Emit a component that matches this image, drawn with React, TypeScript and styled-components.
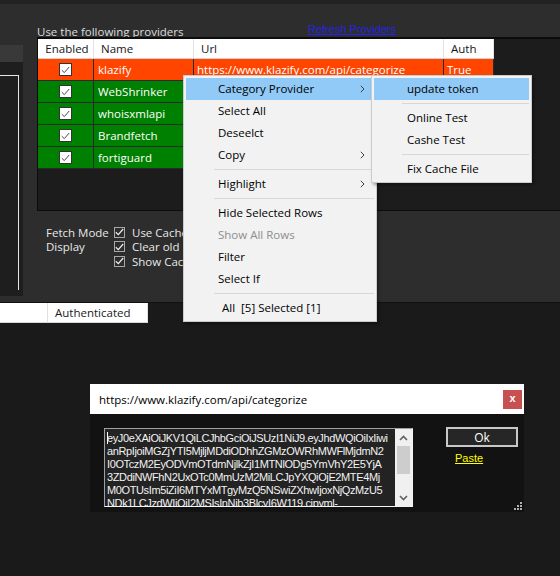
import React from "react";
import styled, { createGlobalStyle } from "styled-components";

const UI = `"Open Sans", "Noto Sans", sans-serif`;
const MS = `"Liberation Sans", Arial, sans-serif`;

const Global = createGlobalStyle`
  html, body { margin: 0; padding: 0; background: #1a1a1a; }
  #root { width: 560px; height: 576px; }
  * { box-sizing: border-box; }
`;

const Screen = styled.div`
  position: relative;
  width: 560px;
  height: 576px;
  overflow: hidden;
  background: #1a1a1a;
  font-family: ${UI};
  font-size: 11.5px;
`;

const TopPanel = styled.div`
  height: 303px;
  border-top: 4px solid #222222;
  border-bottom: 1px solid #101010;
  background: #2d2d2d;
  display: flex;
`;

const LeftPane = styled.div`
  width: 23px;
  padding-top: 41px;
  display: flex;
  flex-direction: column;
`;

const PaneTab = styled.div`
  height: 17px;
  background: #393939;
`;

const PaneBody = styled.div`
  height: 234px;
  background: #1e1e1e;
  padding-top: 13px;
`;

const PaneFrame = styled.div`
  width: 19px;
  height: 215px;
  border-top: 1px solid #e6e6e6;
  border-right: 1px solid #e6e6e6;
`;

const Group = styled.div`
  margin-left: 14px;
  flex: 1;
  padding-top: 21px;
  display: flex;
  flex-direction: column;
  min-width: 0;
`;

const LabelRow = styled.div`
  height: 12px;
  display: grid;
  grid-template-columns: 271px auto;
  align-items: start;
`;

const GroupLabel = styled.span`
  color: #dcdcdc;
  line-height: 14px;
  white-space: nowrap;
`;

const LinkText = styled.span<{ $color: string }>`
  font-family: ${MS};
  font-size: 11px;
  color: ${(p) => p.$color};
  text-decoration: underline;
  white-space: nowrap;
`;

const RefreshLink = styled(LinkText)`
  line-height: 12px;
  margin-top: -2px;
`;

const Grid = styled.div`
  height: 174px;
  border-top: 2px solid #0c0c0c;
  border-left: 1px solid #0c0c0c;
  border-bottom: 1px solid #0c0c0c;
  background: #1c1c1c;
  position: relative;
  z-index: 1;
`;

const GridRow = styled.div<{ $h: number }>`
  display: grid;
  grid-template-columns: 56px 100px 250px 50px;
  height: ${(p) => p.$h}px;
`;

const HeadCell = styled.div<{ $center?: boolean }>`
  background: #ffffff;
  border-right: 1px solid #e3e3e3;
  border-bottom: 1px solid #d2d2d2;
  color: #151515;
  display: flex;
  align-items: center;
  justify-content: ${(p) => (p.$center ? "center" : "flex-start")};
  padding-left: ${(p) => (p.$center ? 3 : 7)}px;
  white-space: nowrap;
`;

const Cell = styled.div<{ $bg: string; $center?: boolean; $pad?: number }>`
  background: ${(p) => p.$bg};
  border-right: 1px solid #2a2a2a;
  border-bottom: 1px solid #2a2a2a;
  color: #ffffff;
  display: flex;
  align-items: center;
  justify-content: ${(p) => (p.$center ? "center" : "flex-start")};
  padding-left: ${(p) => (p.$center ? 0 : p.$pad ?? 3)}px;
  white-space: nowrap;
  overflow: hidden;
`;

const GridCheck = styled.span`
  width: 13px;
  height: 13px;
  background: #ffffff;
  border: 1px solid #333333;
  display: flex;
  align-items: center;
  justify-content: center;
`;

const Options = styled.div`
  margin-top: 14px;
  padding-left: 9px;
  display: grid;
  grid-template-columns: 68px auto;
  grid-auto-rows: 14.5px;
  color: #e8e8e8;
  align-items: center;
`;

const OptLabel = styled.span`
  white-space: nowrap;
`;

const OptCheck = styled.label`
  display: flex;
  align-items: center;
  gap: 7px;
  white-space: nowrap;
`;

const OptBox = styled.span`
  width: 11px;
  height: 11px;
  border: 1px solid #a8a8a8;
  background: #2d2d2d;
  display: flex;
  align-items: center;
  justify-content: center;
`;

const ListHeader = styled.div`
  width: 148px;
  height: 20px;
  background: #ffffff;
  display: flex;
`;

const ListHeadCell = styled.div<{ $w?: number }>`
  width: ${(p) => (p.$w ? `${p.$w}px` : "auto")};
  flex: ${(p) => (p.$w ? "none" : 1)};
  border-right: 1px solid #e0e0e0;
  border-bottom: 1px solid #d6d6d6;
  padding-left: 7px;
  line-height: 19px;
  color: #1a1a1a;
`;

const Menu = styled.div<{ $left: number; $width: number; $z: number }>`
  position: absolute;
  top: 75px;
  left: ${(p) => p.$left}px;
  width: ${(p) => p.$width}px;
  background: #f2f2f2;
  border: 1px solid #cccccc;
  padding: 2px;
  box-shadow: 2px 2px 3px rgba(0, 0, 0, 0.35);
  color: #000000;
  z-index: ${(p) => p.$z};
`;

const MenuItem = styled.div<{ $hot?: boolean; $off?: boolean; $indent: number }>`
  height: 22px;
  display: flex;
  align-items: center;
  padding-left: ${(p) => p.$indent}px;
  padding-bottom: 1px;
  background: ${(p) => (p.$hot ? "#91c9f7" : "transparent")};
  color: ${(p) => (p.$off ? "#8d8d8d" : "#000000")};
  white-space: pre;
`;

const Arrow = styled.svg`
  margin-left: auto;
  margin-right: 9px;
`;

const MenuSep = styled.div`
  height: 1px;
  background: #d7d7d7;
  margin: 3px 0 3px 28px;
`;

const Dialog = styled.div`
  position: absolute;
  left: 90px;
  top: 384px;
  width: 434px;
  height: 128px;
  display: flex;
  flex-direction: column;
  z-index: 3;
`;

const TitleBar = styled.div`
  height: 30px;
  background: #ffffff;
  display: flex;
  align-items: center;
  padding-left: 9px;
  color: #000000;
`;

const Title = styled.span`
  flex: 1;
  white-space: nowrap;
`;

const CloseBtn = styled.div`
  width: 19px;
  height: 19px;
  margin-right: 2px;
  background: #c75050;
  color: #ffffff;
  font-family: ${MS};
  font-weight: bold;
  font-size: 11px;
  display: flex;
  align-items: center;
  justify-content: center;
  padding-bottom: 2px;
`;

const DialogBody = styled.div`
  flex: 1;
  background: #121212;
  padding: 14px 0 0 14px;
  display: flex;
  position: relative;
`;

const TextBox = styled.div`
  width: 309px;
  height: 79px;
  border: 1px solid;
  border-color: #a0a0a0 #f4f4f4 #f4f4f4 #a0a0a0;
  background: #232323;
  display: flex;
`;

const TokenText = styled.div`
  flex: 1;
  padding: 3px 0 0 2px;
  overflow: hidden;
  font-family: ${MS};
  font-size: 11px;
  letter-spacing: -0.38px;
  line-height: 13px;
  color: #f2f2f2;
  white-space: pre;
`;

const Caret = styled.span`
  display: inline-block;
  width: 1px;
  height: 12px;
  background: #ffffff;
  vertical-align: -2px;
  margin-right: -1px;
`;

const ScrollBar = styled.div`
  width: 17px;
  background: #f0f0f0;
  display: flex;
  flex-direction: column;
`;

const ScrollArrow = styled.div`
  height: 17px;
  display: flex;
  align-items: center;
  justify-content: center;
`;

const ScrollTrack = styled.div`
  flex: 1;
  padding: 0 2px;
`;

const ScrollThumb = styled.div`
  height: 28px;
  background: #cdcdcd;
`;

const SideCol = styled.div`
  margin-left: 33px;
  width: 72px;
  display: flex;
  flex-direction: column;
  margin-top: -1px;
`;

const OkButton = styled.div`
  height: 20px;
  border: 2px solid #c8c8c8;
  background: #262626;
  color: #ffffff;
  display: flex;
  align-items: center;
  justify-content: center;
  font-size: 12px;
`;

const PasteLink = styled(LinkText)`
  margin-top: 4px;
  margin-left: 9px;
  line-height: 14px;
`;

const Grip = styled.svg`
  position: absolute;
  right: 2px;
  bottom: 2px;
`;

const CheckMark = ({ color, w }: { color: string; w: number }) => (
  <svg width="9" height="8" viewBox="0 0 9 8">
    <path d="M0.8 4.2 L3.3 6.6 L8.2 1" fill="none" stroke={color} strokeWidth={w} />
  </svg>
);

const Chevron = () => (
  <Arrow width="5" height="8" viewBox="0 0 5 8">
    <path d="M0.8 0.8 L4 4 L0.8 7.2" fill="none" stroke="#404040" strokeWidth="1" />
  </Arrow>
);

const providers = [
  { name: "klazify", url: "https://www.klazify.com/api/categorize", auth: "True", bg: "#ff4500" },
  { name: "WebShrinker", url: "", auth: "", bg: "#008000" },
  { name: "whoisxmlapi", url: "", auth: "", bg: "#008000" },
  { name: "Brandfetch", url: "", auth: "", bg: "#008000" },
  { name: "fortiguard", url: "", auth: "", bg: "#008000" },
];

const tokenLines = [
  "eyJ0eXAiOiJKV1QiLCJhbGciOiJSUzI1NiJ9.eyJhdWQiOiIxIiwi",
  "anRpIjoiMGZjYTI5MjljMDdiODhhZGMzOWRhMWFlMjdmN2",
  "I0OTczM2EyODVmOTdmNjlkZjI1MTNlODg5YmVhY2E5YjA",
  "3ZDdiNWFhN2UxOTc0MmUzM2MiLCJpYXQiOjE2MTE4Mj",
  "M0OTUsIm5iZiI6MTYxMTgyMzQ5NSwiZXhwIjoxNjQzMzU5",
  "NDk1LCJzdWIiOiI2MSIsInNjb3BlcyI6W119.cjpyml-",
];

type Entry = { label?: string; hot?: boolean; off?: boolean; sub?: boolean; sep?: boolean; indent?: number };

const mainMenu: Entry[] = [
  { label: "Category Provider", hot: true, sub: true },
  { label: "Select All" },
  { label: "Deseelct" },
  { label: "Copy", sub: true },
  { sep: true },
  { label: "Highlight", sub: true },
  { sep: true },
  { label: "Hide Selected Rows" },
  { label: "Show All Rows", off: true },
  { label: "Filter" },
  { label: "Select If" },
  { sep: true },
  { label: "All  [5] Selected [1]", indent: 36 },
];

const subMenu: Entry[] = [
  { label: "update token", hot: true },
  { sep: true },
  { label: "Online Test" },
  { label: "Cashe Test" },
  { sep: true },
  { label: "Fix Cache File" },
];

const renderMenu = (items: Entry[], indent: number) =>
  items.map((it, i) =>
    it.sep ? (
      <MenuSep key={i} />
    ) : (
      <MenuItem key={i} $hot={it.hot} $off={it.off} $indent={it.indent ?? indent}>
        {it.label}
        {it.sub && <Chevron />}
      </MenuItem>
    )
  );

export default function App() {
  return (
    <Screen>
      <Global />
      <TopPanel>
        <LeftPane>
          <PaneTab />
          <PaneBody>
            <PaneFrame />
          </PaneBody>
        </LeftPane>
        <Group>
          <LabelRow>
            <GroupLabel>Use the following providers</GroupLabel>
            <RefreshLink $color="#2424e6">Refresh Providers</RefreshLink>
          </LabelRow>
          <Grid>
            <GridRow $h={20}>
              <HeadCell $center>Enabled</HeadCell>
              <HeadCell>Name</HeadCell>
              <HeadCell>Url</HeadCell>
              <HeadCell>Auth</HeadCell>
            </GridRow>
            {providers.map((p) => (
              <GridRow $h={22} key={p.name}>
                <Cell $bg={p.bg} $center>
                  <GridCheck>
                    <CheckMark color="#4a4a4a" w={1} />
                  </GridCheck>
                </Cell>
                <Cell $bg={p.bg} $pad={4}>{p.name}</Cell>
                <Cell $bg={p.bg}>{p.url}</Cell>
                <Cell $bg={p.bg}>{p.auth}</Cell>
              </GridRow>
            ))}
          </Grid>
          <Options>
            <OptLabel>Fetch Mode</OptLabel>
            <OptCheck>
              <OptBox>
                <CheckMark color="#f0f0f0" w={1.2} />
              </OptBox>
              Use Cache
            </OptCheck>
            <OptLabel>Display</OptLabel>
            <OptCheck>
              <OptBox>
                <CheckMark color="#f0f0f0" w={1.2} />
              </OptBox>
              Clear old
            </OptCheck>
            <OptLabel />
            <OptCheck>
              <OptBox>
                <CheckMark color="#f0f0f0" w={1.2} />
              </OptBox>
              Show Cache
            </OptCheck>
          </Options>
        </Group>
      </TopPanel>
      <ListHeader>
        <ListHeadCell $w={48} />
        <ListHeadCell>Authenticated</ListHeadCell>
      </ListHeader>

      <Menu $left={183} $width={194} $z={4}>
        {renderMenu(mainMenu, 32)}
      </Menu>
      <Menu $left={371} $width={161} $z={5}>
        {renderMenu(subMenu, 33)}
      </Menu>

      <Dialog>
        <TitleBar>
          <Title>https://www.klazify.com/api/categorize</Title>
          <CloseBtn>x</CloseBtn>
        </TitleBar>
        <DialogBody>
          <TextBox>
            <TokenText>
              {tokenLines.map((l, i) => (
                <div key={i}>
                  {i === 0 && <Caret />}
                  {l}
                </div>
              ))}
            </TokenText>
            <ScrollBar>
              <ScrollArrow>
                <svg width="9" height="6" viewBox="0 0 9 6">
                  <path d="M1 5 L4.5 1.5 L8 5" fill="none" stroke="#606060" strokeWidth="1.6" />
                </svg>
              </ScrollArrow>
              <ScrollTrack>
                <ScrollThumb />
              </ScrollTrack>
              <ScrollArrow>
                <svg width="9" height="6" viewBox="0 0 9 6">
                  <path d="M1 1 L4.5 4.5 L8 1" fill="none" stroke="#606060" strokeWidth="1.6" />
                </svg>
              </ScrollArrow>
            </ScrollBar>
          </TextBox>
          <SideCol>
            <OkButton>Ok</OkButton>
            <PasteLink $color="#ffff00">Paste</PasteLink>
          </SideCol>
          <Grip width="8" height="8" viewBox="0 0 8 8">
            <g fill="#b0b0b0">
              <rect x="6" y="0" width="2" height="2" />
              <rect x="3" y="3" width="2" height="2" />
              <rect x="6" y="3" width="2" height="2" />
              <rect x="0" y="6" width="2" height="2" />
              <rect x="3" y="6" width="2" height="2" />
              <rect x="6" y="6" width="2" height="2" />
            </g>
          </Grip>
        </DialogBody>
      </Dialog>
    </Screen>
  );
}
